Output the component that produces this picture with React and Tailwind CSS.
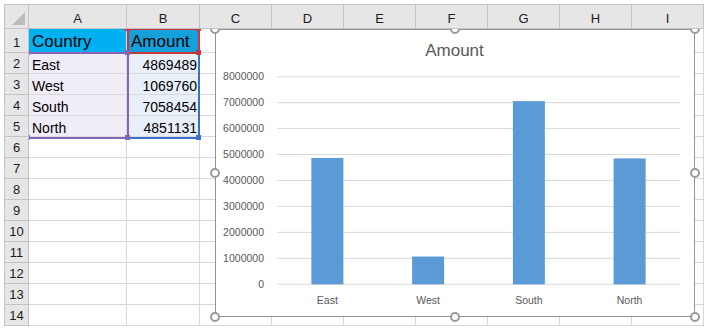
import React from 'react'

const cols = ['A', 'B', 'C', 'D', 'E', 'F', 'G', 'H', 'I']

const data = [
  ['East', 4869489],
  ['West', 1069760],
  ['South', 7058454],
  ['North', 4851131],
]

const font = { fontFamily: '"Liberation Sans", Arial, sans-serif' }

// chart geometry (inside the chart border)
const zeroY = 254.3
const perMillion = 25.95
const gridX1 = 61
const gridX2 = 464
const slot = (gridX2 - gridX1) / 4
const barW = 32

function HeaderCell({ children, className = '' }) {
  return (
    <div
      className={
        'relative z-20 flex items-end justify-center pb-[1px] bg-[#e6e6e6] border-r border-b border-[#c3c3c3] text-[13px] leading-4 text-[#1c1c1c] ' +
        className
      }
    >
      {children}
    </div>
  )
}

function Cell({ children, className = '' }) {
  return (
    <div className={'flex items-end border-r border-b border-[#d9d9d9] text-black ' + className}>
      {children}
    </div>
  )
}

function Handle() {
  return <div className="w-[10px] h-[10px] rounded-full border-2 border-[#9a9a9a] bg-white" />
}

function Square({ color, hidden }) {
  return <div className={'w-[5px] h-[5px] ' + color + (hidden ? ' opacity-0' : '')} />
}

function Chart() {
  const ticks = [0, 1, 2, 3, 4, 5, 6, 7, 8]
  return (
    <div className="absolute left-[215px] top-[29px] z-10 w-[480px] h-[288px] bg-white border border-[#939393]">
      <svg className="absolute inset-0" width="478" height="286" style={font}>
        <text x="238.5" y="26" textAnchor="middle" fontSize="17" fill="#595959">
          Amount
        </text>
        {ticks.map((k) => {
          const y = zeroY - perMillion * k
          return (
            <g key={k}>
              <line x1={gridX1} x2={gridX2} y1={y} y2={y} stroke="#d9d9d9" strokeWidth="1" />
              <text x="48" y={y + 3.6} textAnchor="end" fontSize="10.5" fill="#595959">
                {k === 0 ? '0' : k * 1000000}
              </text>
            </g>
          )
        })}
        {data.map(([name, v], i) => {
          const cx = gridX1 + slot * i + slot / 2
          const h = (v / 1000000) * perMillion
          return (
            <g key={name}>
              <rect x={cx - barW / 2} y={zeroY - h} width={barW} height={h} fill="#5b9bd5" />
              <text x={cx} y="274" textAnchor="middle" fontSize="10.5" fill="#595959">
                {name}
              </text>
            </g>
          )
        })}
      </svg>
      {/* selection handles around the frame */}
      <div className="absolute inset-[-6px] flex flex-col justify-between">
        <div className="flex justify-between">
          <Handle />
          <Handle />
          <Handle />
        </div>
        <div className="flex justify-between">
          <Handle />
          <Handle />
        </div>
        <div className="flex justify-between">
          <Handle />
          <Handle />
          <Handle />
        </div>
      </div>
    </div>
  )
}

function RangeMarks() {
  return (
    <>
      {/* values range B2:B5 */}
      <div className="absolute left-[127px] top-[52px] z-[11] w-[73px] h-[87px] border-2 border-[#3a70c8]">
        <div className="absolute -right-[3px] -bottom-[3px]">
          <Square color="bg-[#3a70c8]" />
        </div>
      </div>
      {/* series name B1 */}
      <div className="absolute left-[127px] top-[28px] z-[12] w-[73px] h-[26px] border-2 border-[#c8373d]">
        <div className="absolute -left-[4px] -right-[3px] -top-[4px] -bottom-[3px] flex flex-col justify-between">
          <div className="flex justify-between">
            <Square color="bg-[#c8373d]" />
            <Square color="bg-[#c8373d]" />
          </div>
          <div className="flex justify-between">
            <Square color="bg-[#c8373d]" hidden />
            <Square color="bg-[#c8373d]" />
          </div>
        </div>
      </div>
      {/* categories range A2:A5 */}
      <div className="absolute left-[27px] top-[52px] z-[13] w-[102px] h-[87px] border-2 border-[#8764b8]">
        <div className="absolute -left-[4px] -right-[3px] -top-[4px] -bottom-[3px] flex flex-col justify-between">
          <div className="flex justify-between">
            <Square color="bg-[#8764b8]" />
            <Square color="bg-[#8764b8]" />
          </div>
          <div className="flex justify-between">
            <Square color="bg-[#8764b8]" />
            <Square color="bg-[#8764b8]" />
          </div>
        </div>
      </div>
    </>
  )
}

export default function App() {
  const rest = Array.from({ length: 9 }, (_, i) => i + 6)

  return (
    <div className="relative w-[710px] h-[332px] bg-white overflow-hidden pt-[4px] pl-[4px]" style={font}>
      <div className="grid w-fit grid-cols-[24px_98px_73px_72px_72px_72px_72px_72px_72px_72px] grid-rows-[24px_24px_repeat(13,21px)] border-l border-t border-[#c3c3c3]">
        {/* column headers */}
        <HeaderCell className="items-end justify-end pb-[3px] pr-[3px]">
          <div className="w-0 h-0 border-l-[13px] border-l-transparent border-b-[13px] border-b-[#bdbdbd]" />
        </HeaderCell>
        {cols.map((c) => (
          <HeaderCell key={c}>{c}</HeaderCell>
        ))}

        {/* row 1 */}
        <HeaderCell>1</HeaderCell>
        <Cell className="bg-[#00b0f0] pl-[3px] text-[17px] leading-5">Country</Cell>
        <Cell className="bg-[#15a0dc] pl-[4px] text-[17px] leading-5">Amount</Cell>
        {cols.slice(2).map((c) => (
          <Cell key={c} />
        ))}

        {/* rows 2-5 */}
        {data.map(([name, v], i) => (
          <React.Fragment key={name}>
            <HeaderCell>{i + 2}</HeaderCell>
            <Cell className="bg-[#f0edf7] pl-[3px] text-[14px] leading-4">{name}</Cell>
            <Cell className="bg-[#e9eff9] justify-end pr-[2px] text-[14px] leading-4">{v}</Cell>
            {cols.slice(2).map((c) => (
              <Cell key={c} />
            ))}
          </React.Fragment>
        ))}

        {/* rows 6-14 */}
        {rest.map((r) => (
          <React.Fragment key={r}>
            <HeaderCell>{r}</HeaderCell>
            {cols.map((c) => (
              <Cell key={c} />
            ))}
          </React.Fragment>
        ))}
      </div>

      <RangeMarks />
      <Chart />
    </div>
  )
}
